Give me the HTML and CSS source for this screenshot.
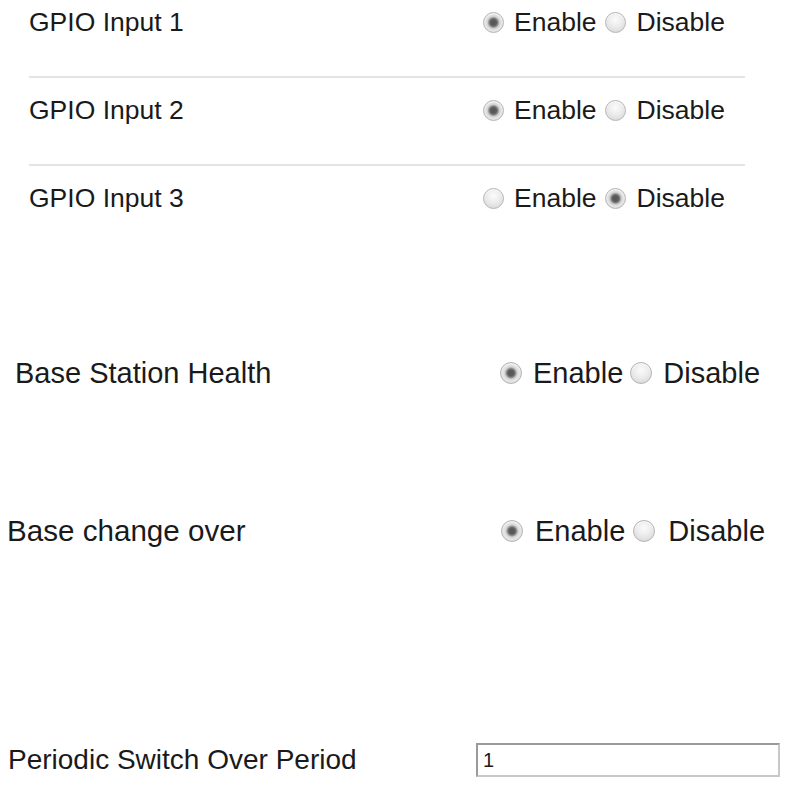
FILE: index.html
```html
<!DOCTYPE html>
<html>
<head>
<meta charset="utf-8">
<link rel="stylesheet" href="styles.css">
</head>
<body>
<div class="page">
  <div class="gpio">
    <div class="row gpio-row">
      <span class="label gpio-label">GPIO Input 1</span>
      <span class="opts opts-a">
        <input type="radio" name="g1" checked><span class="opt">Enable</span>
        <input type="radio" name="g1"><span class="opt">Disable</span>
      </span>
    </div>
    <div class="row gpio-row">
      <span class="label gpio-label">GPIO Input 2</span>
      <span class="opts opts-a">
        <input type="radio" name="g2" checked><span class="opt">Enable</span>
        <input type="radio" name="g2"><span class="opt">Disable</span>
      </span>
    </div>
    <div class="row gpio-row">
      <span class="label gpio-label">GPIO Input 3</span>
      <span class="opts opts-a">
        <input type="radio" name="g3"><span class="opt">Enable</span>
        <input type="radio" name="g3" checked><span class="opt">Disable</span>
      </span>
    </div>
  </div>

  <div class="row big health">
    <span class="label health-label">Base Station Health</span>
    <span class="opts opts-b">
      <input type="radio" name="h" checked><span class="opt">Enable</span>
      <input type="radio" name="h"><span class="opt">Disable</span>
    </span>
  </div>

  <div class="row big change">
    <span class="label change-label">Base change over</span>
    <span class="opts opts-c">
      <input type="radio" name="c" checked><span class="opt">Enable</span>
      <input type="radio" name="c"><span class="opt">Disable</span>
    </span>
  </div>

  <div class="row period">
    <span class="label period-label">Periodic Switch Over Period</span>
    <input type="text" class="text-in" value="1">
  </div>
</div>
</body>
</html>
```

FILE: styles.css
```css
html, body {
  margin: 0;
  padding: 0;
  background: #fff;
}
body {
  font-family: "Liberation Sans", Arial, sans-serif;
  color: #1a1a1a;
  width: 795px;
  height: 796px;
  overflow: hidden;
}
.page {
  display: flex;
  flex-direction: column;
}
.row {
  display: flex;
  align-items: center;
  height: 44px;
  line-height: 44px;
  white-space: nowrap;
}
.gpio {
  display: flex;
  flex-direction: column;
  margin-left: 29px;
  width: 716px;
  font-size: 26.5px;
}
.gpio-row {
  box-sizing: content-box;
  padding: 10px 0 32px;
  border-bottom: 2px solid #e4e4e4;
}
.gpio-row:first-child {
  padding-top: 0;
}
.gpio-row:last-child {
  border-bottom: none;
  padding-bottom: 0;
}
.gpio-label {
  width: 454px;
}
.opts {
  display: flex;
  align-items: center;
}
.opts input[type=radio] {
  -webkit-appearance: none;
  appearance: none;
  margin: 0;
  width: 21px;
  height: 21px;
  border-radius: 50%;
  border: 1px solid #b4b4b4;
  box-sizing: border-box;
  background: radial-gradient(circle at 50% 35%, #fbfbfb 0, #ececec 45%, #d2d2d2 100%);
  box-shadow: inset 0 1px 1px rgba(255,255,255,0.8);
}
.opts input[type=radio]:checked {
  background: radial-gradient(circle at 50% 50%, #555 0, #5c5c5c 3px, #8a8a8a 4.5px, #cfcfcf 6px, #e6e6e6 8px, #d2d2d2 100%);
}
.opts-a input[type=radio]:first-child { margin-right: 10px; }
.opts-a .opt:nth-child(2) { margin-right: 8px; }
.opts-a input[type=radio]:nth-child(3) { margin-right: 11px; }

.big {
  font-size: 29px;
}
.opts-b input[type=radio], .opts-c input[type=radio] {
  width: 22px;
  height: 22px;
}
.health {
  margin-top: 131px;
  padding-left: 15px;
}
.health-label { width: 485px; }
.opts-b input[type=radio]:first-child { margin-right: 11px; }
.opts-b .opt:nth-child(2) { margin-right: 7px; }
.opts-b input[type=radio]:nth-child(3) { margin-right: 11px; }

.change {
  margin-top: 114px;
  padding-left: 7px;
}
.change-label {
  width: 494px;
  font-size: 29.6px;
}
.opts-c input[type=radio]:first-child { margin-right: 12px; }
.opts-c .opt:nth-child(2) { margin-right: 8px; }
.opts-c input[type=radio]:nth-child(3) { margin-right: 13px; }

.period {
  margin-top: 185px;
  padding-left: 8px;
  font-size: 28px;
}
.period-label { width: 468px; }
.text-in {
  box-sizing: border-box;
  width: 304px;
  height: 34px;
  margin: 0;
  padding: 0 0 0 5px;
  border: 2px solid;
  border-color: #9a9a9a #c8c8c8 #c8c8c8 #9a9a9a;
  font-family: "Liberation Sans", Arial, sans-serif;
  font-size: 20px;
  color: #1a1a1a;
  background: #fff;
  outline: none;
}
```
